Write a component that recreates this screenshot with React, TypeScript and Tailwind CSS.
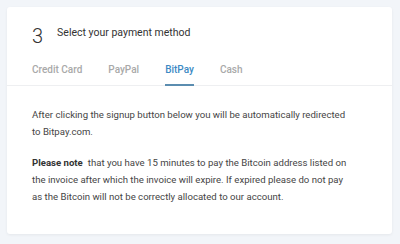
const tabs = ['Credit Card', 'PayPal', 'BitPay', 'Cash']

export default function App() {
  return (
    <div className="w-[400px] h-[244px] bg-[#f2f5f9] pt-[7px] pl-[7px] font-['Roboto',sans-serif]">
      <div className="w-[385px] h-[227px] bg-white rounded-[3px] shadow-[0_1px_3px_rgba(0,0,0,0.06)]">
        <div className="flex items-center pl-[25px] pt-[19px] h-[38px]">
          <span className="text-[20px] font-light text-[#333] leading-none">3</span>
          <span className="ml-[14px] text-[10.5px] text-[#333] leading-none -mt-[4px]">Select your payment method</span>
        </div>
        <div className="flex pl-[25px] gap-[26px] border-b border-[#eeeff1] mt-[18px]">
          {tabs.map((t) => (
            <div
              key={t}
              className={
                t === 'BitPay'
                  ? 'text-[10px] leading-[14px] font-medium text-[#3d8ac4] pb-[7px] border-b-2 border-[#5b8db0] -mb-px'
                  : 'text-[10px] leading-[14px] font-medium text-[#a9a9a9] pb-[7px] border-b-2 border-transparent -mb-px'
              }
            >
              {t}
            </div>
          ))}
        </div>
        <div className="pl-[25px] pt-[20px] w-[345px] text-[9.6px] leading-[17px] text-[#454545]">
          <p>After clicking the signup button below you will be automatically redirected to Bitpay.com.</p>
          <p className="mt-[14px]">
            <span className="font-bold text-[#333] mr-[5px]">Please note</span>that you have 15 minutes to pay the Bitcoin address listed on the invoice after which the invoice will expire. If expired please do not pay as the Bitcoin will not be correctly allocated to our account.
          </p>
        </div>
      </div>
    </div>
  )
}
